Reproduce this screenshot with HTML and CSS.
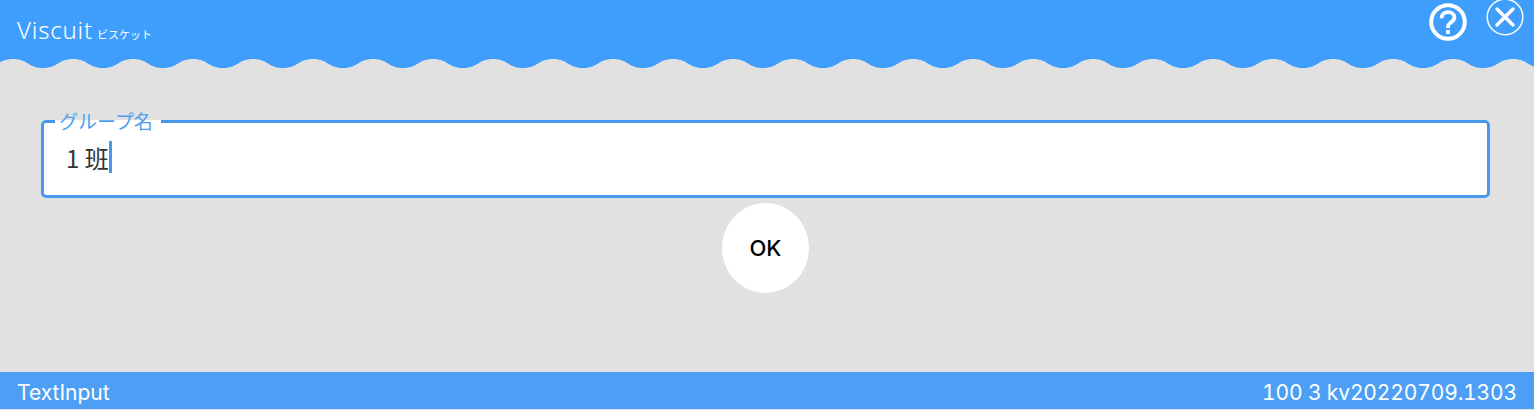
FILE: index.html
```html
<!DOCTYPE html>
<html lang="ja">
<head>
  <meta charset="UTF-8">
  <title>Viscuit</title>
  <link rel="stylesheet" href="styles.css">
</head>
<body>
  <header class="top-bar">
    <div class="title">Viscuit<span class="title-kana">ビスケット</span></div>
    <div class="top-icons">
      <svg class="icon-help" width="38" height="38" viewBox="0 0 38 38" fill="none" stroke="#fff">
        <circle cx="19" cy="19" r="16.8" stroke-width="4"/>
        <path d="M12.6 15.2c0-3.8 2.8-6 6.4-6s6.4 2.1 6.4 5.3c0 4.6-6.4 4.8-6.4 9.2v1.2" stroke-width="3.8"/>
        <path d="M19 27v4" stroke-width="3.8"/>
      </svg>
      <svg class="icon-close" width="38" height="36" viewBox="0 0 38 36" fill="none" stroke="#fff">
        <circle cx="19" cy="17" r="17.8" stroke-width="1.5"/>
        <path d="M11 9l16 16M27 9L11 25" stroke-width="3.4" stroke-linecap="round"/>
      </svg>
    </div>
  </header>
  <svg class="wave" width="100%" height="10">
    <defs>
      <pattern id="wavePat" width="60" height="10" patternUnits="userSpaceOnUse" x="13">
        <rect width="60" height="10" fill="#e1e1e1"/>
        <path d="M0 0C15 0 15 9 30 9C45 9 45 0 60 0Z" fill="#3f9efb"/>
      </pattern>
    </defs>
    <rect width="100%" height="10" fill="url(#wavePat)"/>
  </svg>
  <main class="content">
    <fieldset class="field">
      <legend class="field-label">グループ名</legend>
      <div class="field-value">1 班<span class="caret"></span></div>
    </fieldset>
    <button class="ok-button">OK</button>
  </main>
  <footer class="status-bar">
    <span>TextInput</span>
    <span class="version">100 3 kv20220709.1303</span>
  </footer>
</body>
</html>
```

FILE: styles.css
```css
html, body {
  margin: 0;
  height: 410px;
  overflow: hidden;
}
body {
  display: flex;
  flex-direction: column;
  background-color: #e1e1e1;
  font-family: Inter, "Noto Sans CJK JP", sans-serif;
}
.top-bar {
  display: flex;
  justify-content: space-between;
  height: 59px;
  padding: 0 10px 0 17px;
  background-color: #3f9efb;
  color: #fff;
}
.title {
  margin-top: 15px;
  font-family: "Noto Sans", "Noto Sans CJK JP", sans-serif;
  font-size: 24px;
  font-weight: 300;
  line-height: 30px;
  letter-spacing: 0.8px;
}
.title-kana {
  margin-left: 4px;
  font-size: 11px;
  font-weight: 400;
  letter-spacing: 0;
}
.top-icons {
  display: flex;
  align-items: flex-start;
  gap: 19px;
}
.icon-help {
  margin-top: 3px;
}
.wave {
  display: block;
  flex: none;
}
.content {
  flex: 1;
  padding: 0 44px 0 41px;
  display: flex;
  flex-direction: column;
  align-items: center;
}
.field {
  box-sizing: border-box;
  width: 100%;
  height: 88px;
  margin: 41px 0 0;
  padding: 0 22px;
  border: 3px solid #4a98ee;
  border-radius: 5px;
  background-color: #fff;
}
.field-label {
  margin-left: -11px;
  padding: 0 8px 2px 4px;
  color: #4da0f0;
  font-family: "Noto Sans CJK JP", sans-serif;
  font-size: 19px;
  line-height: 21px;
}
.field-value {
  display: flex;
  align-items: center;
  height: 48px;
  color: #333;
  font-family: "Noto Sans CJK JP", sans-serif;
  font-size: 24px;
}
.caret {
  width: 3px;
  height: 32px;
  background-color: #4a98ee;
}
.ok-button {
  width: 87px;
  height: 90px;
  margin-top: 5px;
  border: none;
  border-radius: 50%;
  background-color: #fff;
  color: #000;
  font-family: Inter, sans-serif;
  font-size: 22px;
  font-weight: 500;
}
.status-bar {
  display: flex;
  justify-content: space-between;
  align-items: center;
  box-sizing: border-box;
  height: 37px;
  margin-bottom: 1px;
  padding: 4px 17px 0;
  background-color: #4d9ff5;
  color: #fff;
  font-size: 21px;
  font-feature-settings: "tnum";
}
.version {
  letter-spacing: -0.15px;
}
```
